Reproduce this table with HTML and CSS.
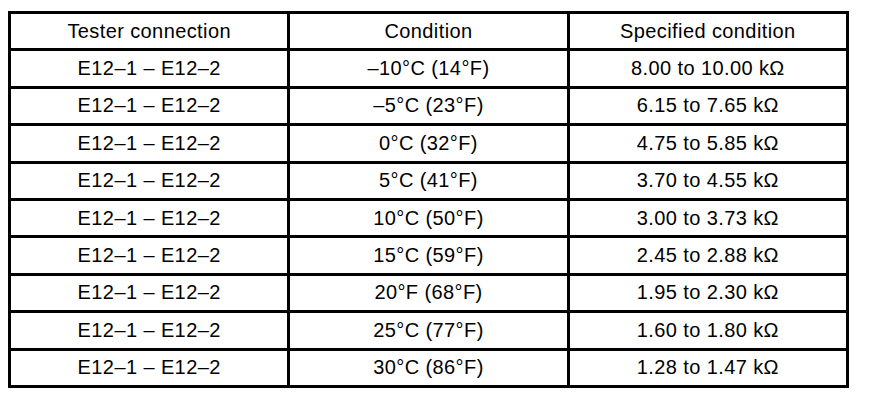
FILE: index.html
```html
<!DOCTYPE html>
<html lang="en">
<head>
    <meta charset="UTF-8">
    <meta name="viewport" content="width=device-width, initial-scale=1.0">
    <title>Thermistor resistance</title>
    <link rel="stylesheet" href="styles.css">
</head>
<body>
    <table class="spec-table">
        <thead>
            <tr>
                <th>Tester connection</th>
                <th>Condition</th>
                <th>Specified condition</th>
            </tr>
        </thead>
        <tbody>
            <tr><td>E12–1 – E12–2</td><td>–10°C (14°F)</td><td>8.00 to 10.00 kΩ</td></tr>
            <tr><td>E12–1 – E12–2</td><td>–5°C (23°F)</td><td>6.15 to 7.65 kΩ</td></tr>
            <tr><td>E12–1 – E12–2</td><td>0°C (32°F)</td><td>4.75 to 5.85 kΩ</td></tr>
            <tr><td>E12–1 – E12–2</td><td>5°C (41°F)</td><td>3.70 to 4.55 kΩ</td></tr>
            <tr><td>E12–1 – E12–2</td><td>10°C (50°F)</td><td>3.00 to 3.73 kΩ</td></tr>
            <tr><td>E12–1 – E12–2</td><td>15°C (59°F)</td><td>2.45 to 2.88 kΩ</td></tr>
            <tr><td>E12–1 – E12–2</td><td>20°F (68°F)</td><td>1.95 to 2.30 kΩ</td></tr>
            <tr><td>E12–1 – E12–2</td><td>25°C (77°F)</td><td>1.60 to 1.80 kΩ</td></tr>
            <tr><td>E12–1 – E12–2</td><td>30°C (86°F)</td><td>1.28 to 1.47 kΩ</td></tr>
        </tbody>
    </table>
</body>
</html>
```

FILE: styles.css
```css
body {
    margin: 0;
    background-color: #fff;
    font-family: "Liberation Sans", Arial, sans-serif;
    color: #000;
}

.spec-table {
    margin: 11px 0 0 8px;
    width: 841px;
    border-collapse: collapse;
    border: 3px solid #000;
    table-layout: fixed;
}

.spec-table th,
.spec-table td {
    border: 3px solid #000;
    height: 34.4px;
    padding: 0;
    text-align: center;
    vertical-align: middle;
    font-size: 20px;
    font-weight: normal;
    letter-spacing: 0.4px;
}
```
